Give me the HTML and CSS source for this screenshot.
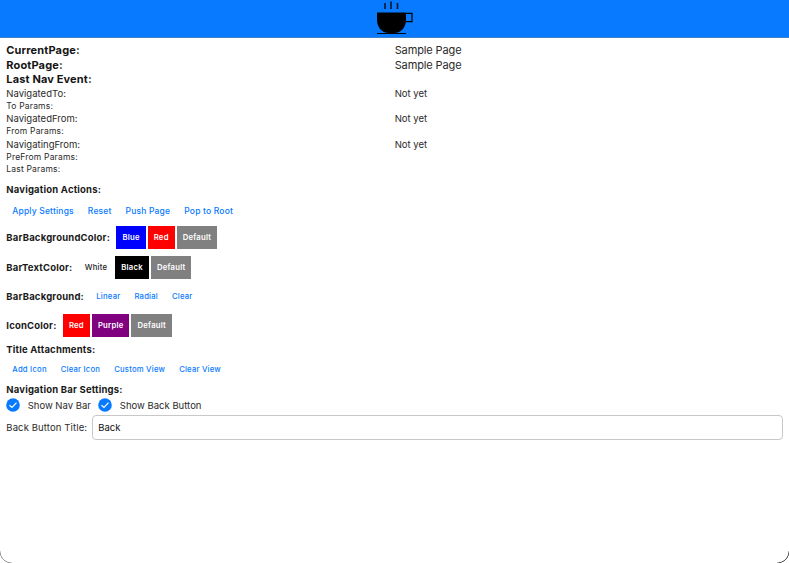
FILE: index.html
```html
<!DOCTYPE html>
<html lang="en">
<head>
<meta charset="utf-8">
<title>Sample Page</title>
<link rel="stylesheet" href="styles.css">
</head>
<body>
<div class="window">
  <header class="nav-bar">
    <svg class="cup" width="38" height="36" viewBox="0 0 38 36" aria-hidden="true">
      <path d="M9 3V9M15 1.5V9M21.500 3V9" fill="none" stroke="#06142c" stroke-width="1.6"/>
      <path d="M1 12.500H30V20C30 27 25 33 18.500 33H12.500C6 33 1 27 1 20Z" fill="#000"/>
      <path d="M30 13.300H36V21.700H29.500M1 33.500H30" fill="none" stroke="#000" stroke-width="1.2"/>
    </svg>
  </header>
  <main>
    <dl class="status">
      <div class="large"><dt>CurrentPage:</dt><dd>Sample Page</dd></div>
      <div class="large"><dt>RootPage:</dt><dd>Sample Page</dd></div>
      <div class="large"><dt>Last Nav Event:</dt></div>
      <div class="medium"><dt>NavigatedTo:</dt><dd>Not yet</dd></div>
      <div class="small"><dt>To Params:</dt></div>
      <div class="medium"><dt>NavigatedFrom:</dt><dd>Not yet</dd></div>
      <div class="small"><dt>From Params:</dt></div>
      <div class="medium"><dt>NavigatingFrom:</dt><dd>Not yet</dd></div>
      <div class="small"><dt>PreFrom Params:</dt></div>
      <div class="small"><dt>Last Params:</dt></div>
    </dl>
    <h2 class="actions-title">Navigation Actions:</h2>
    <div class="row actions"><button>Apply Settings</button><button>Reset</button><button>Push Page</button><button>Pop to Root</button></div>
    <div class="row"><h2>BarBackgroundColor:</h2><button class="fill blue">Blue</button><button class="fill red">Red</button><button class="fill gray">Default</button></div>
    <div class="row"><h2>BarTextColor:</h2><button class="fill white">White</button><button class="fill black">Black</button><button class="fill gray">Default</button></div>
    <div class="row"><h2>BarBackground:</h2><button>Linear</button><button>Radial</button><button>Clear</button></div>
    <div class="row"><h2>IconColor:</h2><button class="fill red">Red</button><button class="fill purple">Purple</button><button class="fill gray">Default</button></div>
    <h2 class="attach-title">Title Attachments:</h2>
    <div class="row attach"><button>Add Icon</button><button>Clear Icon</button><button>Custom View</button><button>Clear View</button></div>
    <h2 class="settings-title">Navigation Bar Settings:</h2>
    <div class="checks">
      <svg width="14" height="14" viewBox="0 0 14 14" aria-hidden="true"><circle cx="7" cy="7" r="6.800" fill="#087aff"/><path d="M3.500 7.300L6 9.500L10.500 4.700" fill="none" stroke="#fff" stroke-width="1.200"/></svg>
      <span class="first">Show Nav Bar</span>
      <svg width="14" height="14" viewBox="0 0 14 14" aria-hidden="true"><circle cx="7" cy="7" r="6.800" fill="#087aff"/><path d="M3.500 7.300L6 9.500L10.500 4.700" fill="none" stroke="#fff" stroke-width="1.200"/></svg>
      <span>Show Back Button</span>
    </div>
    <div class="field"><label for="back">Back Button Title:</label><input id="back" type="text" value="Back"></div>
  </main>
</div>
</body>
</html>
```
FILE: styles.css
```css
* { box-sizing: border-box; }
body { margin: 0; background: #fff; font-family: Inter, "Liberation Sans", sans-serif; color: #2a2a2a; }
.window { position: relative; height: 563px; background: #fff; overflow: hidden; }
.window::after { content: ""; position: absolute; inset: auto 0 0; height: 12px; pointer-events: none; background:
  radial-gradient(circle at 12px 0, transparent 11.300px, #999 11.800px, #999 12.200px, transparent 12.700px) left / 12px 12px no-repeat,
  radial-gradient(circle at 0 0, transparent 11.300px, #555 11.800px, #555 12.200px, transparent 12.700px) right / 12px 12px no-repeat; }
.nav-bar { height: 38px; background: #087aff; border-bottom: 1px solid #3f83cf; display: flex; justify-content: center; }
.cup { display: block; margin-left: 1px; }
main { padding: 5px 6px 0 6.300px; }
.status { margin: 0; }
.status div { display: grid; grid-template-columns: 1fr 1fr; }
dt, dd { margin: 0; white-space: nowrap; }
.large { height: 14.600px; font-size: 11px; line-height: 15px; letter-spacing: .14px; }
.large dt { font-weight: 700; color: #151515; }
.large dd { letter-spacing: -.12px; }
.medium { height: 13px; font-size: 9.500px; line-height: 13px; letter-spacing: .02px; }
.small { height: 12.400px; font-size: 8.500px; line-height: 12.400px; letter-spacing: .19px; }
h2 { margin: 0; font-size: 9.500px; font-weight: 700; line-height: 13px; letter-spacing: .19px; color: #1a1a1a; white-space: nowrap; }
.actions-title { margin-top: 8px; }
.row { display: flex; align-items: center; height: 23px; margin-top: 6.200px; }
.row h2 { margin-right: 6.400px; }
button { border: 0; margin: 0 2px 0 0; padding: 0 6px; height: 23px; background: none; color: #087aff; font: 500 7.700px/23px Inter, sans-serif; letter-spacing: .21px; white-space: nowrap; }
.actions { margin-top: 3px; height: 24px; }
.actions + .row { margin-top: 3px; }
.actions button { font-size: 8.500px; letter-spacing: .18px; }
.fill { color: #fff; font-weight: 600; letter-spacing: .24px; }
.blue { background: #00f; }
.red { background: #f00; }
.gray { background: #808080; }
.black { background: #000; }
.purple { background: #800080; }
.white { color: #222; font-weight: 500; }
.attach-title { margin-top: 5.600px; }
.attach { margin-top: 2.400px; }
.settings-title { margin-top: 2px; }
.checks { display: flex; align-items: center; height: 18px; margin-top: .5px; font-size: 9.500px; letter-spacing: 0; }
.checks svg { flex: none; }
.checks span { margin-left: 7.400px; }
.checks .first { margin-right: 7.600px; }
.field { display: flex; align-items: center; height: 25px; margin-top: .5px; font-size: 9.500px; letter-spacing: .12px; }
label { white-space: nowrap; margin-right: 5px; }
input { flex: 1; min-width: 0; height: 25px; border: 1px solid #c8c8c8; border-radius: 4px; padding: 0 5px; font: 9.500px Inter, sans-serif; letter-spacing: .05px; color: #111; background: #fff; }
```
